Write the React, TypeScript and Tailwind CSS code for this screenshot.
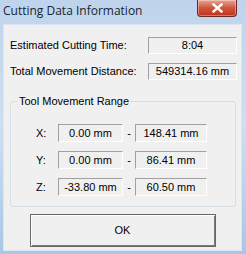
export default function App() {
  const ranges = [
    { axis: "X:", min: "0.00 mm", max: "148.41 mm" },
    { axis: "Y:", min: "0.00 mm", max: "86.41 mm" },
    { axis: "Z:", min: "-33.80 mm", max: "60.50 mm" },
  ];

  const field =
    "flex items-center justify-center h-[17px] border-t border-l border-[#a0a0a0] border-b border-r border-b-white border-r-white bg-[#f0f0f0]";

  return (
    <div className="w-[246px] h-[254px] flex flex-col bg-gradient-to-b from-[#bfd4ec] via-[#cddff2] to-[#a9c6e6] font-['Liberation_Sans',Arial,sans-serif] text-[11px] text-black overflow-hidden">
      {/* title bar */}
      <div className="h-[24px] flex items-start justify-between pl-[3px] pr-[9px]">
        <span className="mt-[3px] text-[12px] leading-[16px] text-[#1a2430] font-['Open_Sans',sans-serif]">
          Cutting Data Information
        </span>
        <div className="w-[40px] h-[17px] rounded-b-[4px] border border-t-0 border-[#6b2a20] bg-gradient-to-b from-[#e8a493] via-[#d0543d] to-[#c0301a] flex items-center justify-center shadow-[inset_0_0_0_1px_rgba(255,255,255,0.35)]">
          <svg width="11" height="10" viewBox="0 0 11 10">
            <path d="M1.5 1.5 L9.5 8.5 M9.5 1.5 L1.5 8.5" stroke="#fff" strokeWidth="2.4" strokeLinecap="square" />
          </svg>
        </div>
      </div>

      {/* client area */}
      <div className="flex-1 ml-[3px] mr-[4px] mb-[3px] border border-[#dbe6f2]">
        <div className="h-full bg-[#f0f0f0] flex flex-col pl-[6px] pr-[4px] pt-[12px]">
          <div className="flex items-center justify-between">
            <span>Estimated Cutting Time:</span>
            <div className={`${field} w-[89px]`}>8:04</div>
          </div>
          <div className="flex items-center justify-between mt-[9px]">
            <span>Total Movement Distance:</span>
            <div className={`${field} w-[89px]`}>549314.16 mm</div>
          </div>

          {/* group box */}
          <fieldset className="mt-[14px] h-[113px] w-[226px] border border-[#d5dfe5] rounded-[3px]">
            <legend className="ml-[7px] px-[1px] leading-[14px]">Tool Movement Range</legend>
            <div className="flex flex-col gap-[9px] mt-[16px] pl-[25px]">
              {ranges.map((r) => (
                <div key={r.axis} className="flex items-center">
                  <span className="w-[22px]">{r.axis}</span>
                  <div className={`${field} w-[65px] h-[18px]`}>{r.min}</div>
                  <span className="w-[12px] text-center">-</span>
                  <div className={`${field} w-[72px] h-[18px]`}>{r.max}</div>
                </div>
              ))}
            </div>
          </fieldset>

          <div className="flex justify-center mt-[7px] pr-[2px]">
            <button className="w-[186px] h-[33px] border border-[#686868] bg-[#f0f0f0] shadow-[inset_1px_1px_0_#ffffff,inset_-1px_-1px_0_#7a7a7a] flex items-center justify-center">
              OK
            </button>
          </div>
        </div>
      </div>
    </div>
  );
}
